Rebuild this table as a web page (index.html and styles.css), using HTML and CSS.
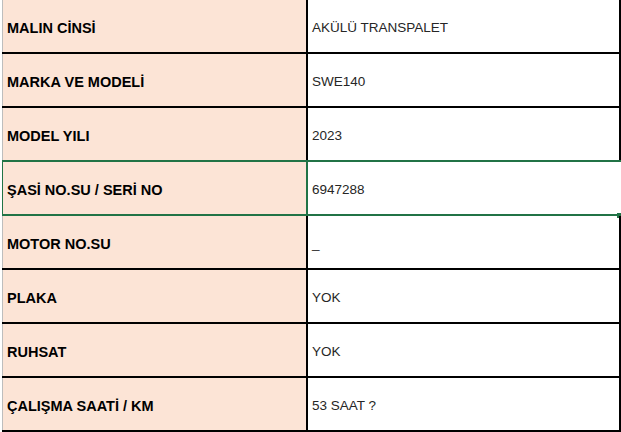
FILE: index.html
```html
<!DOCTYPE html>
<html lang="tr">
<head>
<meta charset="utf-8">
<link rel="stylesheet" href="styles.css">
</head>
<body>
<div class="sheet">
  <div class="row"><div class="label">MALIN CİNSİ</div><div class="value">AKÜLÜ TRANSPALET</div></div>
  <div class="row"><div class="label">MARKA VE MODELİ</div><div class="value">SWE140</div></div>
  <div class="row above-sel"><div class="label">MODEL YILI</div><div class="value">2023</div></div>
  <div class="row sel"><div class="label">ŞASİ NO.SU / SERİ NO</div><div class="value">6947288<span class="handle"></span></div></div>
  <div class="row"><div class="label">MOTOR NO.SU</div><div class="value">_</div></div>
  <div class="row"><div class="label">PLAKA</div><div class="value">YOK</div></div>
  <div class="row"><div class="label">RUHSAT</div><div class="value">YOK</div></div>
  <div class="row"><div class="label">ÇALIŞMA SAATİ / KM</div><div class="value">53 SAAT ?</div></div>
</div>
</body>
</html>
```
FILE: styles.css
```css
html, body {
  margin: 0;
  padding: 0;
  background: #ffffff;
}
.sheet {
  margin-left: 2px;
  width: 619px;
  font-family: "Liberation Sans", Arial, sans-serif;
}
.row {
  display: flex;
  height: 54px;
  box-sizing: border-box;
  border-bottom: 2px solid #000;
}
.label, .value {
  display: flex;
  align-items: center;
  box-sizing: border-box;
  padding-top: 3px;
}
.label {
  width: 306px;
  background: #fce4d6;
  border-left: 1px solid #bdbdbd;
  border-right: 2px solid #000;
  padding-left: 4px;
  font-weight: bold;
  font-size: 14.5px;
  color: #000;
}
.value {
  position: relative;
  width: 313px;
  border-right: 2px solid #000;
  padding-left: 4px;
  font-size: 13.5px;
  color: #262626;
}
.above-sel {
  border-bottom-color: #217346;
}
.sel {
  border-bottom-color: #217346;
}
.sel .label {
  border-left: 1px solid #217346;
  border-right-color: #217346;
}
.sel .value {
  border-right-color: transparent;
}
.handle {
  position: absolute;
  right: -2px;
  bottom: -4px;
  width: 4px;
  height: 5px;
  background: #217346;
}
```
